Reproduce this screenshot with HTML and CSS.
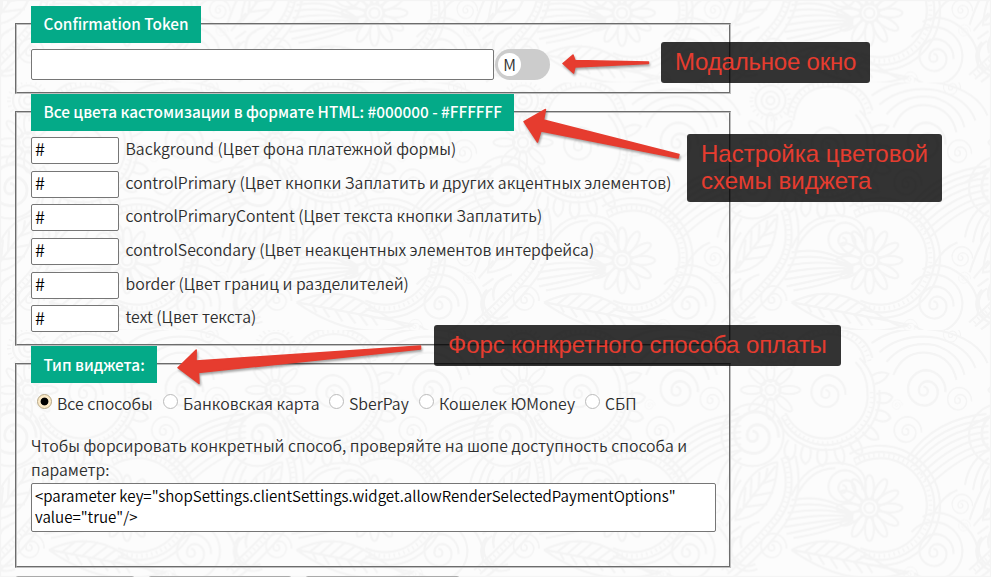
FILE: index.html
```html
<!DOCTYPE html>
<html lang="ru">
<head>
<meta charset="utf-8">
<title>Confirmation Token</title>
<link rel="stylesheet" href="styles.css">
</head>
<body>
<svg class="wallpaper" width="991" height="577" aria-hidden="true">
  <defs>
    <path id="spiral" d="M0 -3a4 4 0 1 1 -4 4a8 8 0 0 1 8 -9a10 10 0 0 1 9 11a12 12 0 0 1 -13 11a15 15 0 0 1 -14 -15a17 17 0 0 1 17 -17a19 19 0 0 1 17 20"/>
    <g id="petals"><ellipse cx="0" cy="-21" rx="4.5" ry="12"/><ellipse cx="0" cy="21" rx="4.5" ry="12"/><ellipse cx="-21" cy="0" rx="12" ry="4.5"/><ellipse cx="21" cy="0" rx="12" ry="4.5"/></g>
    <g id="tile">
      <circle cx="128" cy="178" r="9"/><circle cx="128" cy="178" r="5"/>
      <use href="#petals" transform="translate(128 178)"/>
      <use href="#petals" transform="translate(128 178) rotate(30)"/>
      <use href="#petals" transform="translate(128 178) rotate(60)"/>
      <path d="M114 135a47 47 0 1 1 5 83M112 129a54 54 0 1 1 7 97M108 124a60 60 0 1 1 10 108"/>
      <path class="beads" d="M113 132a50.500 50.500 0 1 1 6 90"/>
      <use href="#spiral" transform="translate(101 158)"/>
      <path d="M50 166Q64 132 96 133T124 163M54 168Q68 138 94 138"/>
      <path d="M50 170Q84 163 112 184M48 176Q84 170 112 185M46 183Q84 176 112 186M44 190Q84 183 112 187M43 197Q84 190 112 188M45 204Q84 196 112 189M52 208Q90 202 112 190"/>
      <use href="#spiral" transform="translate(84 63)"/>
      <path d="M44 83a43 43 0 0 0 82 -22a43 43 0 0 0 -12 -29M40 87a49 49 0 0 0 93 -26a49 49 0 0 0 -15 -33M36 90a54 54 0 0 0 102 -30"/>
      <path class="beads" d="M42 85a46 46 0 0 0 88 -24"/>
      <path d="M47 110q-8 12 0 20q8-2 7-16M62 116q-6 12 2 18q7-4 5-17M77 119q-4 13 4 17q7-5 3-18M93 118q0 12 8 16q5-7-2-19M108 112q3 12 12 13q3-8-6-18M121 102q7 10 16 7q0-8-11-14M132 88q10 7 17 0q-3-8-15-8M135 72q12 4 16-5q-5-6-16-3M133 54q10-2 14-10q-8-4-17 2"/>
      <g transform="translate(29 60)"><circle r="10"/><circle r="5"/><use href="#petals" transform="scale(.9)"/><use href="#petals" transform="scale(.9) rotate(45)"/></g>
      <use href="#spiral" transform="translate(11 105) scale(1.3)"/>
      <circle cx="11" cy="105" r="31"/>
      <use href="#spiral" transform="translate(182 60) scale(1.1)"/>
      <path d="M152 45q10-25 36-22q22 4 27 27M145 32q18-22 48-17q25 8 30 30M138 22q24-20 58-14q30 8 38 30M130 13q28-20 70-12q36 8 46 32"/>
      <use href="#spiral" transform="translate(216 70) scale(.7)"/>
      <use href="#spiral" transform="translate(164 101) scale(.8)"/>
      <use href="#spiral" transform="translate(155 75) scale(.3)"/>
      <path d="M166 128Q194 88 245 84M169 132Q198 93 247 90M172 136Q204 98 247 96M175 140Q209 104 247 102M179 145Q214 110 247 108M183 150Q218 117 247 114M187 156Q222 123 247 120"/>
      <path d="M0 86Q-12 92-24 100M0 120Q-20 130-24 155M0 128Q-12 136-16 160M0 136Q-7 145-8 160"/>
      <path d="M46 126Q58 164 36 192T-14 244M40 128Q52 164 30 190T-20 240M54 126Q64 166 42 196T-8 247"/>
      <path class="beads" d="M43 127Q55 164 33 191T-17 242"/>
      <path d="M36 132Q-2 140 -6 190Q34 186 36 132M34 136L-4 186M26 138L24 150M18 142L17 160M10 148L9 169M4 157L2 178M34 149L20 154M32 162L11 166M26 174L3 177"/>
      <use href="#spiral" transform="translate(30 217) scale(.75)"/>
      <path d="M-2 206a16 16 0 0 0 16 28M-7 207a20 20 0 0 0 23 32M10 196q-12 4-11 18M18 192q-22 6-18 26"/>
      <path d="M50 220Q90 200 126 225T166 242Q110 262 50 220M51 220L166 242M62 223l14-11M72 225l16-14M82 227l17-15M92 229l17-13M102 231l16-12M112 233l14-9M66 223l4 7M77 226l6 9M89 228l7 11M101 230l8 11M113 232l8 11M125 234l6 9"/>
      <use href="#spiral" transform="translate(192 222)"/>
      <path d="M170 202a29 29 0 1 1 3 41M181 187Q200 176 220 193T236 233"/>
      <use href="#spiral" transform="translate(219 175) scale(.6)"/>
      <use href="#spiral" transform="translate(222 196) scale(.35)"/>
      <use href="#spiral" transform="translate(168 244) scale(.4)"/>
      <use href="#spiral" transform="translate(209 5) scale(.5)"/>
      <path d="M192 183Q202 165 216 160M228 190Q238 160 247 150M232 196L247 178M236 204L247 196"/>
      <circle cx="29" cy="18" r="15"/><circle cx="29" cy="18" r="9"/><circle cx="29" cy="18" r="4"/>
      <path class="beads" d="M10 18a19 19 0 0 0 38 0a19 19 0 0 0 -38 0"/>
      <path d="M52 38Q56 5 88 4Q118 5 124 33M46 33Q52-1 88-2Q124 0 131 28"/>
      <path class="beads" d="M49 35Q54 2 88 1Q121 2 128 31"/>
    </g>
    <pattern id="paisley" x="-1" y="82.500" width="247.500" height="247.500" patternUnits="userSpaceOnUse">
      <use href="#tile"/><use href="#tile" x="247.500"/>
    </pattern>
  </defs>
  <rect width="991" height="577" fill="url(#paisley)"/>
</svg>

<form class="panel">
  <fieldset class="group token">
    <legend>Confirmation Token</legend>
    <div class="token-row">
      <input class="token-input" type="text">
      <span class="toggle"><span class="knob">М</span></span>
    </div>
  </fieldset>

  <fieldset class="group colors">
    <legend>Все цвета кастомизации в формате HTML: #000000 - #FFFFFF</legend>
    <label class="color-row"><input type="text" value="#"><span>Background (Цвет фона платежной формы)</span></label>
    <label class="color-row"><input type="text" value="#"><span>controlPrimary (Цвет кнопки Заплатить и других акцентных элементов)</span></label>
    <label class="color-row"><input type="text" value="#"><span>controlPrimaryContent (Цвет текста кнопки Заплатить)</span></label>
    <label class="color-row"><input type="text" value="#"><span>controlSecondary (Цвет неакцентных элементов интерфейса)</span></label>
    <label class="color-row"><input type="text" value="#"><span>border (Цвет границ и разделителей)</span></label>
    <label class="color-row"><input type="text" value="#"><span>text (Цвет текста)</span></label>
  </fieldset>

  <fieldset class="group widget">
    <legend>Тип виджета:</legend>
    <div class="methods">
      <label class="m1"><input type="radio" name="m" checked><span>Все способы</span></label>
      <label class="m2"><input type="radio" name="m"><span>Банковская карта</span></label>
      <label class="m3"><input type="radio" name="m"><span>SberPay</span></label>
      <label class="m4"><input type="radio" name="m"><span>Кошелек ЮMoney</span></label>
      <label class="m5"><input type="radio" name="m"><span>СБП</span></label>
    </div>
    <p class="hint">Чтобы форсировать конкретный способ, проверяйте на шопе доступность способа и<br>параметр:</p>
    <div class="code">&lt;parameter key="shopSettings.clientSettings.widget.allowRenderSelectedPaymentOptions"<br>value="true"/&gt;</div>
  </fieldset>
  <div class="actions"><span class="b1"></span><span class="b2"></span><span class="b3"></span></div>
</form>

<svg class="arrows" width="991" height="577" aria-hidden="true">
  <path d="M563 63.500L573 55L575 60.500L648.500 62V63.500L575 67L573.500 73Z"/>
  <path d="M524 121.700L545.500 109.500L543.500 120L679 154.500L678 158L541 131L537.500 142Z"/>
  <path d="M178 367.700L196.200 350L196 361L420.500 346V349L198.500 372.500L199 383.500Z"/>
</svg>
<div class="note n1">Модальное окно</div>
<div class="note n2">Настройка цветовой<br>схемы виджета</div>
<div class="note n3">Форс конкретного способа оплаты</div>
</body>
</html>
```
FILE: styles.css
```css
* { box-sizing: border-box; }
html, body { margin: 0; height: 577px; overflow: hidden; }
body {
  position: relative;
  background: #fcfcfc;
  color: #2e2e2e;
  font: 350 15.820px/24px "Noto Sans CJK SC", "Noto Sans", sans-serif;
}
.wallpaper { position: absolute; left: 0; top: 0; fill: none; stroke: #f4f4f4; stroke-width: 2.2; }
.wallpaper .beads { stroke-width: 4; stroke-dasharray: 1.5 3.5; }
.panel { position: relative; width: 716px; margin: 0 0 0 15px; padding-top: 6px; }
.group { margin: 0; padding: 6.200px 13px 0 14px; min-width: 0; border: 2px groove #c0c0c0; }
.token { height: 88px; }
.colors { height: 252px; }
.widget { height: 222px; }
legend {
  height: 36.800px;
  padding: 0 12.500px;
  background: #04aa88;
  color: #fff;
  font-size: 15.330px;
  font-weight: 500;
  line-height: 35px;
  white-space: nowrap;
}
.widget legend { line-height: 37px; }
input { font: inherit; color: #000; }
input[type="text"] { margin: 0; border: 1px solid #767676; border-radius: 2px; background: #fff; padding: 0 4px 3px; outline: 0; }
.token-row { display: flex; }
.token-input { width: 463px; height: 31px; }
.toggle { width: 55px; height: 31px; padding: 4px 3px; border-radius: 16px; background: #ccc; margin-left: 1px; }
.knob { display: block; width: 23px; height: 23px; border-radius: 50%; background: #fff; text-align: center; line-height: 24px; }
.color-row { display: flex; height: 33.650px; gap: 6.500px; white-space: nowrap; }
.color-row input[type="text"] { width: 88px; height: 27px; padding: 0 3px 4px; font-size: 18px; }
.color-row span { line-height: 24px; }
.methods { display: flex; height: 30px; padding-left: 6px; white-space: nowrap; }
.methods label { display: flex; }
.methods input { appearance: none; flex: none; width: 15px; height: 15px; margin: 5px 5px 0 0; border: 1px solid #bbb; border-radius: 50%; background: #fff; }
.methods input:checked { border-color: #b5a684; background: radial-gradient(circle, #000 0 3.500px, #fbe9c6 4.300px); }
.methods span { line-height: 30px; }
.m1 { width: 126px; }
.m2 { width: 166px; }
.m3 { width: 90px; }
.m4 { width: 166px; }
.hint { margin: 15px 0 0; white-space: nowrap; }
.code { width: 685px; height: 49px; margin-top: 1px; padding: 1px 3px; border: 1px solid #767676; border-radius: 2px; background: #fff; color: #000; line-height: 21px; font-size: 15.110px; white-space: nowrap; }
.actions { display: flex; gap: 13px; padding-top: 8px; }
.actions span { height: 20px; border: 1px solid #aaa; border-radius: 3px; background: #eee; }
.b1 { width: 120px; }
.b2 { width: 144px; }
.b3 { width: 155px; }
.arrows { position: absolute; left: 0; top: 0; fill: #e63c2f; stroke: #e63c2f; stroke-width: 1.5; stroke-linejoin: round; filter: drop-shadow(1px 2px 1px rgba(0,0,0,.35)); }
.note { position: absolute; padding: 6px 14px; border-radius: 3px; background: rgba(0,0,0,.8); color: #e63c2f; font: 24px/27px "Liberation Sans", sans-serif; white-space: nowrap; }
.n1 { left: 661px; top: 42px; width: 209px; height: 41px; letter-spacing: -.2px; }
.n2 { left: 687px; top: 134px; width: 255px; height: 68px; }
.n3 { left: 434px; top: 325px; width: 407px; height: 41px; letter-spacing: -.1px; }
```
